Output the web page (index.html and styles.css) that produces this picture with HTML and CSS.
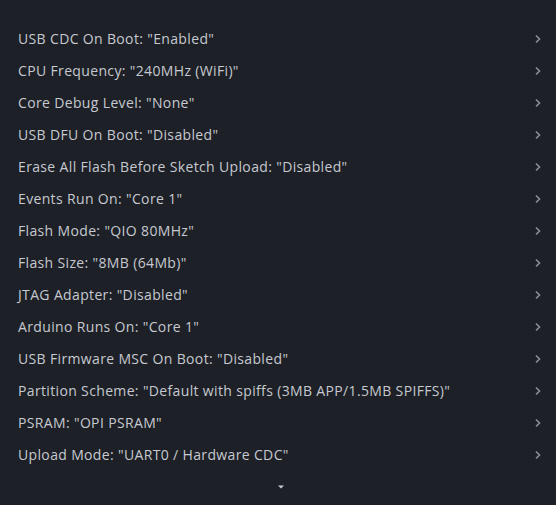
FILE: index.html
```html
<!DOCTYPE html>
<html>
<head>
<meta charset="utf-8">
<link rel="stylesheet" href="styles.css">
</head>
<body>
<div class="menu">
  <ul class="list">
    <li class="item"><span class="label">USB CDC On Boot: "Enabled"</span><svg class="chev" viewBox="0 0 8 10"><path d="M2 1.5 L5.5 5 L2 8.5"/></svg></li>
    <li class="item"><span class="label">CPU Frequency: "240MHz (WiFi)"</span><svg class="chev" viewBox="0 0 8 10"><path d="M2 1.5 L5.5 5 L2 8.5"/></svg></li>
    <li class="item"><span class="label">Core Debug Level: "None"</span><svg class="chev" viewBox="0 0 8 10"><path d="M2 1.5 L5.5 5 L2 8.5"/></svg></li>
    <li class="item"><span class="label">USB DFU On Boot: "Disabled"</span><svg class="chev" viewBox="0 0 8 10"><path d="M2 1.5 L5.5 5 L2 8.5"/></svg></li>
    <li class="item"><span class="label">Erase All Flash Before Sketch Upload: "Disabled"</span><svg class="chev" viewBox="0 0 8 10"><path d="M2 1.5 L5.5 5 L2 8.5"/></svg></li>
    <li class="item"><span class="label">Events Run On: "Core 1"</span><svg class="chev" viewBox="0 0 8 10"><path d="M2 1.5 L5.5 5 L2 8.5"/></svg></li>
    <li class="item"><span class="label">Flash Mode: "QIO 80MHz"</span><svg class="chev" viewBox="0 0 8 10"><path d="M2 1.5 L5.5 5 L2 8.5"/></svg></li>
    <li class="item"><span class="label">Flash Size: "8MB (64Mb)"</span><svg class="chev" viewBox="0 0 8 10"><path d="M2 1.5 L5.5 5 L2 8.5"/></svg></li>
    <li class="item"><span class="label">JTAG Adapter: "Disabled"</span><svg class="chev" viewBox="0 0 8 10"><path d="M2 1.5 L5.5 5 L2 8.5"/></svg></li>
    <li class="item"><span class="label">Arduino Runs On: "Core 1"</span><svg class="chev" viewBox="0 0 8 10"><path d="M2 1.5 L5.5 5 L2 8.5"/></svg></li>
    <li class="item"><span class="label">USB Firmware MSC On Boot: "Disabled"</span><svg class="chev" viewBox="0 0 8 10"><path d="M2 1.5 L5.5 5 L2 8.5"/></svg></li>
    <li class="item"><span class="label">Partition Scheme: "Default with spiffs (3MB APP/1.5MB SPIFFS)"</span><svg class="chev" viewBox="0 0 8 10"><path d="M2 1.5 L5.5 5 L2 8.5"/></svg></li>
    <li class="item"><span class="label">PSRAM: "OPI PSRAM"</span><svg class="chev" viewBox="0 0 8 10"><path d="M2 1.5 L5.5 5 L2 8.5"/></svg></li>
    <li class="item"><span class="label">Upload Mode: "UART0 / Hardware CDC"</span><svg class="chev" viewBox="0 0 8 10"><path d="M2 1.5 L5.5 5 L2 8.5"/></svg></li>
  </ul>
  <div class="more"><svg class="down" viewBox="0 0 8 4"><path d="M1 0.5 H7 L4 3.5 Z"/></svg></div>
</div>
</body>
</html>
```
FILE: styles.css
```css
html, body {
  margin: 0;
  padding: 0;
  background: #1d2027;
}
body {
  width: 556px;
  height: 505px;
  overflow: hidden;
  font-family: "Open Sans", "Liberation Sans", sans-serif;
}
.menu {
  padding-top: 23px;
}
.list {
  list-style: none;
  margin: 0;
  padding: 0;
}
.item {
  height: 32px;
  display: flex;
  align-items: center;
  justify-content: space-between;
  padding: 0 14px 0 18px;
}
.label {
  color: #c6c9cf;
  font-size: 14px;
  letter-spacing: 0.35px;
  line-height: 18px;
  white-space: nowrap;
}
.chev {
  width: 8px;
  height: 10px;
  fill: none;
  stroke: #8b9099;
  stroke-width: 1.6;
}
.more {
  display: flex;
  justify-content: center;
  padding-top: 14px;
  padding-left: 6px;
}
.down {
  width: 8px;
  height: 4px;
  fill: #c9ccd3;
}
```
